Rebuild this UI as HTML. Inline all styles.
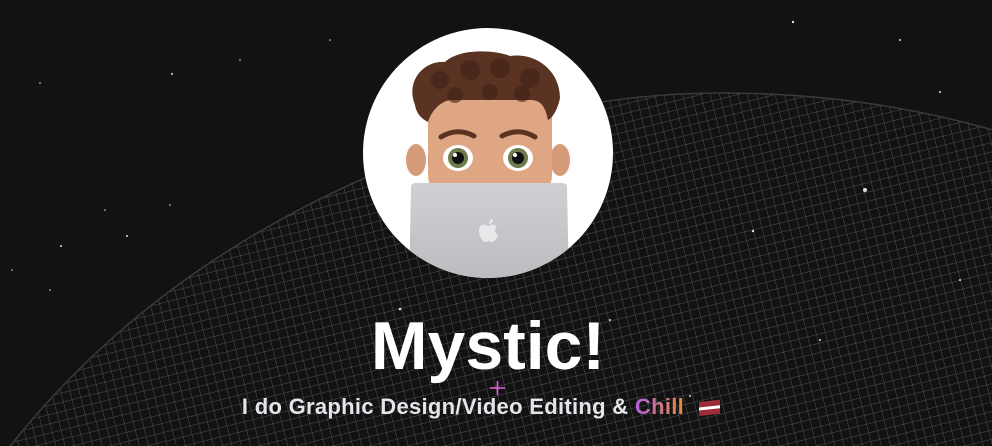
<!DOCTYPE html>
<html><head><meta charset="utf-8">
<style>
html,body{margin:0;padding:0;width:992px;height:446px;overflow:hidden;background:#121212;position:relative;}
.t{position:absolute;left:0;width:992px;text-align:center;font-family:"Liberation Sans",sans-serif;white-space:nowrap;}
</style></head>
<body>
<svg width="992" height="446" style="position:absolute;left:0;top:0">
<defs>
<pattern id="g" width="9" height="9" patternUnits="userSpaceOnUse" patternTransform="rotate(-14)">
<path d="M0 0H9M0 0V9" stroke="#505050" stroke-width="1" fill="none"/>
</pattern>
<clipPath id="cc"><circle cx="488" cy="153" r="125"/></clipPath>
<linearGradient id="lap" x1="0" y1="0" x2="0" y2="1"><stop offset="0" stop-color="#cfd0d4"/><stop offset="1" stop-color="#b9babe"/></linearGradient>
</defs>
<path d="M-30 500 C60 370 220 200 560 110 C680 82 850 88 1000 132 L1000 500 Z" fill="url(#g)"/>
<path d="M-30 500 C60 370 220 200 560 110 C680 82 850 88 1000 132" fill="none" stroke="#3a3a3a" stroke-width="1.5"/>
<g fill="#ddd">
<circle cx="793" cy="22" r="1.2"/><circle cx="865" cy="190" r="2"/><circle cx="753" cy="231" r="1.2"/><circle cx="400" cy="309" r="1.3"/>
<circle cx="172" cy="74" r="1"/><circle cx="127" cy="236" r="1"/><circle cx="61" cy="246" r="1"/><circle cx="40" cy="83" r="0.8"/>
<circle cx="900" cy="40" r="1"/><circle cx="940" cy="92" r="1"/><circle cx="610" cy="320" r="1"/><circle cx="240" cy="60" r="0.8"/>
<circle cx="330" cy="40" r="0.8"/><circle cx="12" cy="270" r="0.8"/><circle cx="50" cy="290" r="0.8"/><circle cx="690" cy="396" r="1"/>
<circle cx="170" cy="205" r="0.8"/><circle cx="105" cy="210" r="0.8"/><circle cx="820" cy="340" r="1"/><circle cx="960" cy="280" r="1"/>
</g>
<circle cx="488" cy="153" r="125" fill="#fff"/>
<g clip-path="url(#cc)">
<ellipse cx="416" cy="160" rx="10" ry="16" fill="#d59c7a"/>
<ellipse cx="560" cy="160" rx="10" ry="16" fill="#d59c7a"/>
<path d="M428 100 Q428 88 440 88 L540 88 Q552 88 552 100 L552 175 Q552 192 535 192 L445 192 Q428 192 428 175 Z" fill="#dfa683"/>
<path d="M415 105 C405 80 425 60 445 62 C460 48 495 50 510 56 C535 52 560 70 560 98 C558 108 553 118 548 120 C545 105 540 100 530 100 L450 100 C440 102 432 110 428 122 C420 118 416 112 415 105 Z" fill="#5a3322"/>
<g fill="#3e2116" opacity="0.6"><circle cx="440" cy="80" r="9"/><circle cx="470" cy="70" r="10"/><circle cx="500" cy="68" r="10"/><circle cx="530" cy="78" r="10"/><circle cx="455" cy="95" r="8"/><circle cx="490" cy="92" r="8"/><circle cx="522" cy="94" r="8"/></g>
<path d="M441 137 Q457 127 474 136" stroke="#5a3322" stroke-width="5" fill="none" stroke-linecap="round"/>
<path d="M502 136 Q519 127 535 137" stroke="#5a3322" stroke-width="5" fill="none" stroke-linecap="round"/>
<ellipse cx="458" cy="158" rx="15" ry="13" fill="#fff"/><ellipse cx="518" cy="158" rx="15" ry="13" fill="#fff"/>
<circle cx="458" cy="158" r="10" fill="#6c7a4c"/><circle cx="518" cy="158" r="10" fill="#6c7a4c"/>
<circle cx="458" cy="158" r="6" fill="#111"/><circle cx="518" cy="158" r="6" fill="#111"/>
<circle cx="455" cy="155" r="2" fill="#fff"/><circle cx="515" cy="155" r="2" fill="#fff"/>
<path d="M411 187 Q411 183 416 183 L562 183 Q567 183 567 187 L569 290 L409 290 Z" fill="url(#lap)"/>
<path d="M488 226 C484 223 479 225 479 231 C479 237 483 242 486 242 C487 242 488 241 489 241 C490 241 491 242 492 242 C495 242 498 236 498 235 C495 234 494 229 497 227 C495 224 491 224 489 226 Z M489 224 C489 221 491 219 493 219 C493 222 491 224 489 224 Z" fill="#e9e9ec"/>
</g>
<path d="M490 388H505M497.5 381V395" stroke="#e060e0" stroke-width="1.6"/>
<g transform="translate(699,402) skewY(-6)">
<rect width="21" height="14" fill="#9e2a3a"/><rect y="5.5" width="21" height="3" fill="#fff"/>
</g>
</svg>
<div class="t" style="top:306px;height:80px;font-size:68px;line-height:80px;font-weight:bold;color:#fff;left:-8px">Mystic!</div>
<div class="t" style="top:392px;height:30px;line-height:30px;font-size:22px;color:#e4e4ea;letter-spacing:0.3px;left:-33px;font-weight:bold;">I do Graphic Design/Video Editing &amp; <span style="background:linear-gradient(90deg,#b35fe0,#e88a3a);-webkit-background-clip:text;background-clip:text;color:transparent">Chill</span></div>
</body></html>
